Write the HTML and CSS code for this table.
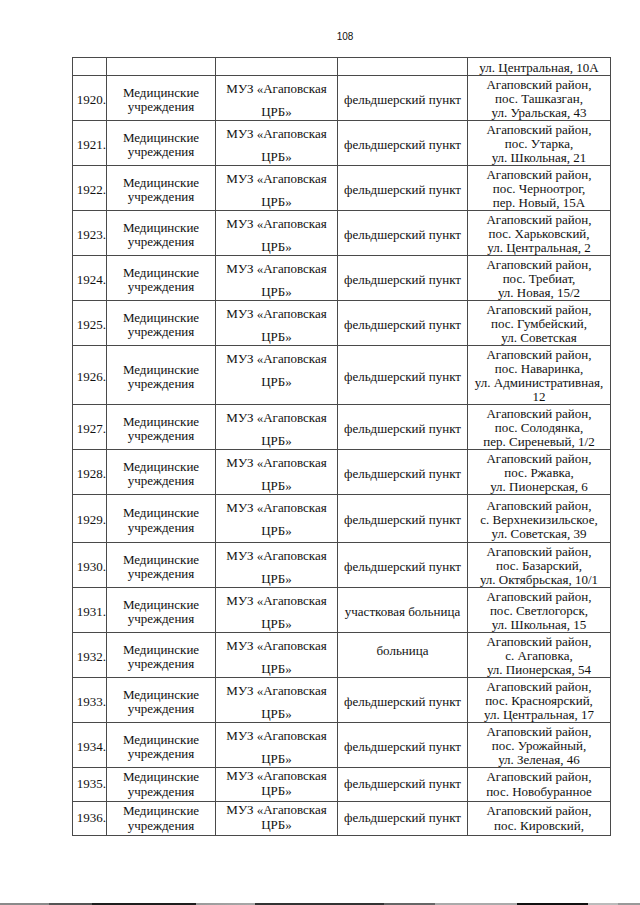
FILE: index.html
```html
<!DOCTYPE html>
<html lang="ru">
<head>
  <meta charset="UTF-8" />
  <meta name="viewport" content="width=device-width, initial-scale=1"/>
  <title>108</title>
  <link rel="stylesheet" href="styles.css">
</head>
<body>

<div class="page-num">108</div>

<table class="registry">
  <colgroup>
    <col class="c-num"><col class="c-type"><col class="c-org"><col class="c-kind"><col class="c-addr">
  </colgroup>
  <tr class="cont">
    <td></td><td></td><td></td><td></td>
    <td class="addr">ул. Центральная, 10А</td>
  </tr>
  <tr>
    <td class="num">1920.</td><td class="type">Медицинские учреждения</td>
    <td class="org">МУЗ «Агаповская<span>ЦРБ»</span></td><td class="kind">фельдшерский пункт</td>
    <td class="addr">Агаповский район,<br>пос. Ташказган,<br>ул. Уральская, 43</td>
  </tr>
  <tr>
    <td class="num">1921.</td><td class="type">Медицинские учреждения</td>
    <td class="org">МУЗ «Агаповская<span>ЦРБ»</span></td><td class="kind">фельдшерский пункт</td>
    <td class="addr">Агаповский район,<br>пос. Утарка,<br>ул. Школьная, 21</td>
  </tr>
  <tr>
    <td class="num">1922.</td><td class="type">Медицинские учреждения</td>
    <td class="org">МУЗ «Агаповская<span>ЦРБ»</span></td><td class="kind">фельдшерский пункт</td>
    <td class="addr">Агаповский район,<br>пос. Черноотрог,<br>пер. Новый, 15А</td>
  </tr>
  <tr>
    <td class="num">1923.</td><td class="type">Медицинские учреждения</td>
    <td class="org">МУЗ «Агаповская<span>ЦРБ»</span></td><td class="kind">фельдшерский пункт</td>
    <td class="addr">Агаповский район,<br>пос. Харьковский,<br>ул. Центральная, 2</td>
  </tr>
  <tr>
    <td class="num">1924.</td><td class="type">Медицинские учреждения</td>
    <td class="org">МУЗ «Агаповская<span>ЦРБ»</span></td><td class="kind">фельдшерский пункт</td>
    <td class="addr">Агаповский район,<br>пос. Требиат,<br>ул. Новая, 15/2</td>
  </tr>
  <tr>
    <td class="num">1925.</td><td class="type">Медицинские учреждения</td>
    <td class="org">МУЗ «Агаповская<span>ЦРБ»</span></td><td class="kind">фельдшерский пункт</td>
    <td class="addr">Агаповский район,<br>пос. Гумбейский,<br>ул. Советская</td>
  </tr>
  <tr>
    <td class="num">1926.</td><td class="type">Медицинские учреждения</td>
    <td class="org">МУЗ «Агаповская<span>ЦРБ»</span></td><td class="kind">фельдшерский пункт</td>
    <td class="addr">Агаповский район,<br>пос. Наваринка,<br>ул. Административная,<br>12</td>
  </tr>
  <tr>
    <td class="num">1927.</td><td class="type">Медицинские учреждения</td>
    <td class="org">МУЗ «Агаповская<span>ЦРБ»</span></td><td class="kind">фельдшерский пункт</td>
    <td class="addr">Агаповский район,<br>пос. Солодянка,<br>пер. Сиреневый, 1/2</td>
  </tr>
  <tr>
    <td class="num">1928.</td><td class="type">Медицинские учреждения</td>
    <td class="org">МУЗ «Агаповская<span>ЦРБ»</span></td><td class="kind">фельдшерский пункт</td>
    <td class="addr">Агаповский район,<br>пос. Ржавка,<br>ул. Пионерская, 6</td>
  </tr>
  <tr class="roomy">
    <td class="num">1929.</td><td class="type">Медицинские учреждения</td>
    <td class="org">МУЗ «Агаповская<span>ЦРБ»</span></td><td class="kind">фельдшерский пункт</td>
    <td class="addr">Агаповский район,<br>с. Верхнекизильское,<br>ул. Советская, 39</td>
  </tr>
  <tr>
    <td class="num">1930.</td><td class="type">Медицинские учреждения</td>
    <td class="org">МУЗ «Агаповская<span>ЦРБ»</span></td><td class="kind">фельдшерский пункт</td>
    <td class="addr">Агаповский район,<br>пос. Базарский,<br>ул. Октябрьская, 10/1</td>
  </tr>
  <tr>
    <td class="num">1931.</td><td class="type">Медицинские учреждения</td>
    <td class="org">МУЗ «Агаповская<span>ЦРБ»</span></td><td class="kind">участковая больница</td>
    <td class="addr">Агаповский район,<br>пос. Светлогорск,<br>ул. Школьная, 15</td>
  </tr>
  <tr>
    <td class="num">1932.</td><td class="type">Медицинские учреждения</td>
    <td class="org">МУЗ «Агаповская<span>ЦРБ»</span></td><td class="kind raised">больница</td>
    <td class="addr">Агаповский район,<br>с. Агаповка,<br>ул. Пионерская, 54</td>
  </tr>
  <tr>
    <td class="num">1933.</td><td class="type">Медицинские учреждения</td>
    <td class="org">МУЗ «Агаповская<span>ЦРБ»</span></td><td class="kind">фельдшерский пункт</td>
    <td class="addr">Агаповский район,<br>пос. Красноярский,<br>ул. Центральная, 17</td>
  </tr>
  <tr>
    <td class="num">1934.</td><td class="type">Медицинские учреждения</td>
    <td class="org">МУЗ «Агаповская<span>ЦРБ»</span></td><td class="kind">фельдшерский пункт</td>
    <td class="addr">Агаповский район,<br>пос. Урожайный,<br>ул. Зеленая, 46</td>
  </tr>
  <tr class="tight">
    <td class="num">1935.</td><td class="type">Медицинские учреждения</td>
    <td class="org">МУЗ «Агаповская<span>ЦРБ»</span></td><td class="kind">фельдшерский пункт</td>
    <td class="addr">Агаповский район,<br>пос. Новобуранное</td>
  </tr>
  <tr class="tight">
    <td class="num">1936.</td><td class="type">Медицинские учреждения</td>
    <td class="org">МУЗ «Агаповская<span>ЦРБ»</span></td><td class="kind">фельдшерский пункт</td>
    <td class="addr">Агаповский район,<br>пос. Кировский,</td>
  </tr>
</table>

<div class="scan-edge"></div>

</body>
</html>
```

FILE: styles.css
```css
body {
  margin: 0;
  background: #fff;
  color: #111;
  font-family: 'Liberation Serif', 'Times New Roman', serif;
  font-size: 13px;
  display: flex; flex-direction: column;
  min-height: 100vh;
}
.page-num {
  font-family: 'Liberation Sans', Arial, sans-serif;
  font-size: 10px; line-height: 12px;
  text-align: center;
  margin: 31px 0 0 50px;
}
.registry {
  margin: 14px 0 0 72px;
  width: 538px;
  border-collapse: collapse;
  table-layout: fixed;
}
.c-num { width: 34px; }
.c-type { width: 109px; }
.c-org { width: 122px; }
.c-kind { width: 130px; }
.c-addr { width: 143px; }
.registry td {
  border: 1px solid #4a4a4a;
  padding: 3px 0 0;
  text-align: center;
  vertical-align: middle;
  line-height: 14px;
}
.cont td { padding: 0; line-height: 15px; }
.registry td.num { text-align: right; padding-right: 0; }
.registry td.type { line-height: 14.5px; padding: 4px 4px 0; }
.registry td.org { vertical-align: top; padding-top: 6px; }
.registry td.org span { display: block; margin-top: 9px; }
.registry td.kind.raised { padding: 0 0 8px; }
.registry td.addr { padding: 2px 0 0; }
.registry .roomy td.addr { padding: 4px 0 1px; }
.registry .tight td { line-height: 14.5px; padding: 2px 0 2px; }
.registry .tight td.type { padding: 2px 4px 2px; }
.registry .tight td.org { padding-top: 1px; }
.registry .tight td.org span { margin-top: 0; }
.scan-edge {
  margin-top: auto;
  height: 2px;
  background: linear-gradient(90deg,
    #8a8a8a 0, #8a8a8a 49px, #555 49px, #555 92px, #1e1e1e 92px, #1e1e1e 196px,
    #9a9a9a 196px, #a8a8a8 255px, #333 255px, #333 384px, #666 384px, #666 435px,
    #aaa 435px, #aaa 517px, #111 517px, #111 588px, #bbb 588px, #bbb 618px, #999 618px);
}
```
